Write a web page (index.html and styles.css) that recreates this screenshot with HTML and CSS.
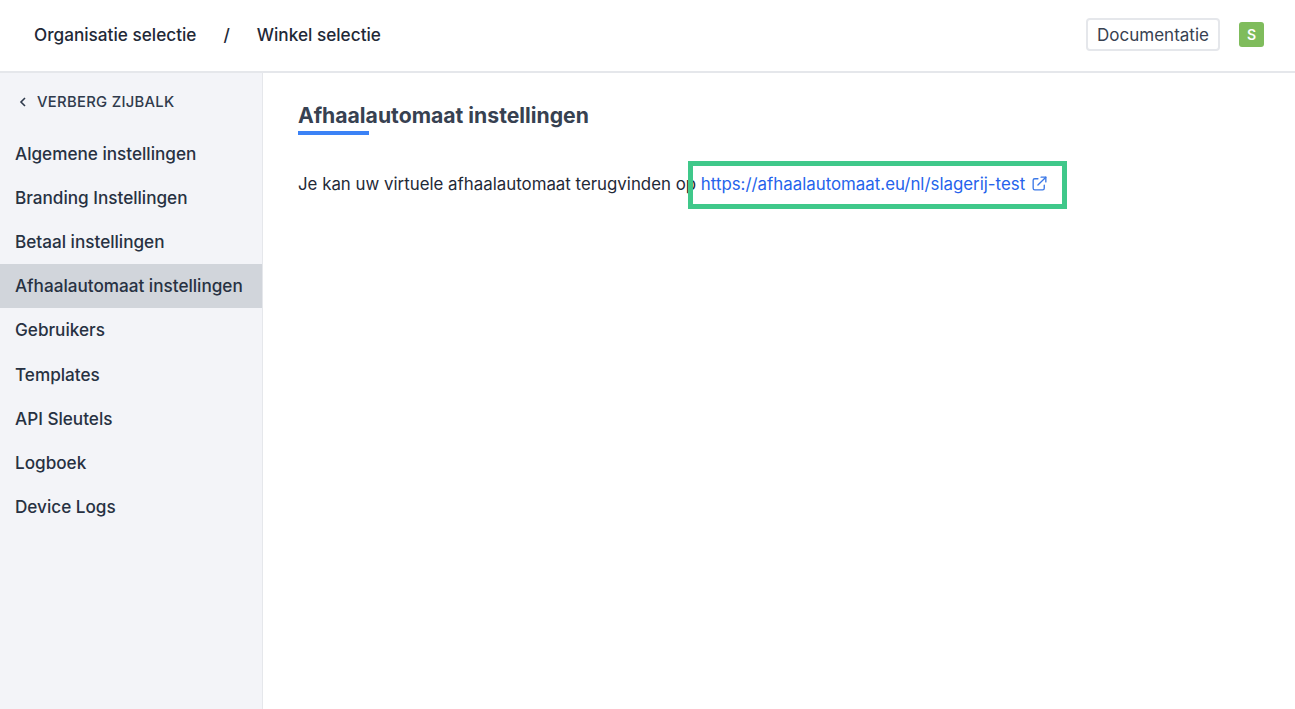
FILE: index.html
```html
<!DOCTYPE html>
<html lang="nl">
<head>
    <meta charset="UTF-8">
    <title>Afhaalautomaat instellingen</title>
    <link rel="stylesheet" href="styles.css">
</head>
<body>
    <header class="topbar">
        <nav class="crumbs">
            <span>Organisatie selectie</span>
            <span class="crumb-sep">/</span>
            <span>Winkel selectie</span>
        </nav>
        <div class="topbar-right">
            <button class="docs-btn">Documentatie</button>
            <span class="avatar">S</span>
        </div>
    </header>

    <div class="layout">
        <aside class="sidebar">
            <div class="hide-link">
                <svg width="10" height="12" viewBox="0 0 10 12" fill="none" stroke="#2f3a4c" stroke-width="1.6"><path d="M7 2 3 6l4 4"/></svg>
                <span>VERBERG ZIJBALK</span>
            </div>
            <ul class="menu">
                <li>Algemene instellingen</li>
                <li>Branding Instellingen</li>
                <li>Betaal instellingen</li>
                <li class="active">Afhaalautomaat instellingen</li>
                <li>Gebruikers</li>
                <li>Templates</li>
                <li>API Sleutels</li>
                <li>Logboek</li>
                <li>Device Logs</li>
            </ul>
        </aside>

        <main class="content">
            <h1 class="title">Afhaalautomaat instellingen</h1>
            <p class="intro">
                Je kan uw virtuele afhaalautomaat terugvinden op
                <a class="ext-link" href="#">https://afhaalautomaat.eu/nl/slagerij-test
                    <svg width="19" height="19" viewBox="0 0 24 24" fill="none" stroke="#3b78e7" stroke-width="1.7" stroke-linecap="round" stroke-linejoin="round"><path d="M10 6H6a2 2 0 0 0-2 2v10a2 2 0 0 0 2 2h10a2 2 0 0 0 2-2v-4"/><path d="M14 4h6v6"/><path d="M20 4 10 14"/></svg>
                </a>
            </p>
            <div class="highlight"></div>
        </main>
    </div>
</body>
</html>
```

FILE: styles.css
```css
* {
    box-sizing: border-box;
}

html, body {
    height: 100%;
}

body {
    margin: 0;
    display: flex;
    flex-direction: column;
    overflow: hidden;
    background: #fff;
    color: #1f2937;
    font-family: Inter, "Liberation Sans", sans-serif;
}

/* Top bar */
.topbar {
    height: 73px;
    flex-shrink: 0;
    display: flex;
    justify-content: space-between;
    align-items: center;
    padding: 0 31px 2px 34px;
    border-bottom: 2px solid #e5e7eb;
}

.crumbs {
    display: flex;
    gap: 27px;
    font-size: 17.2px;
    font-weight: 500;
    color: #1f2937;
}

.topbar-right {
    display: flex;
    align-items: center;
    gap: 19px;
}

.docs-btn {
    width: 134px;
    height: 33px;
    padding: 0;
    background: #fff;
    border: 2px solid #e5e7eb;
    border-radius: 4px;
    font-family: inherit;
    font-size: 17px;
    color: #374151;
}

.avatar {
    width: 25px;
    height: 25px;
    display: flex;
    justify-content: center;
    align-items: center;
    background: #7fbc5c;
    border-radius: 3px;
    color: #fff;
    font-size: 14px;
    font-weight: 600;
}

/* Sidebar */
.layout {
    flex: 1;
    display: flex;
    min-height: 0;
}

.sidebar {
    width: 263px;
    flex-shrink: 0;
    padding-top: 17px;
    background: #f3f4f8;
    border-right: 1px solid #e5e7eb;
}

.hide-link {
    display: flex;
    align-items: center;
    gap: 9px;
    height: 24px;
    padding-left: 18px;
    font-size: 14.8px;
    font-weight: 500;
    letter-spacing: 0.3px;
    color: #2f3a4c;
}

.menu {
    list-style: none;
    margin: 17px 0 0;
    padding: 0;
}

.menu li {
    height: 44.2px;
    display: flex;
    align-items: center;
    padding-left: 15px;
    font-size: 17.15px;
    font-weight: 500;
    color: #273142;
}

.menu li.active {
    background: #d1d5db;
}

/* Content */
.content {
    flex: 1;
    position: relative;
    padding: 28px 35px;
}

.title {
    display: inline-block;
    margin: 0;
    font-size: 21.2px;
    line-height: 28px;
    font-weight: 700;
    color: #374151;
    position: relative;
}

.title::after {
    content: "";
    position: absolute;
    left: 0;
    top: 30px;
    width: 71px;
    height: 4px;
    background: #3b82f6;
}

.intro {
    margin: 43px 0 0;
    font-size: 16.85px;
    line-height: 24px;
    color: #1f2937;
}

.ext-link {
    color: #2563eb;
    text-decoration: none;
}

.ext-link svg {
    vertical-align: -3px;
}

.highlight {
    position: absolute;
    left: 425px;
    top: 88px;
    width: 379px;
    height: 48px;
    border: 5px solid #3fc88a;
}
```
